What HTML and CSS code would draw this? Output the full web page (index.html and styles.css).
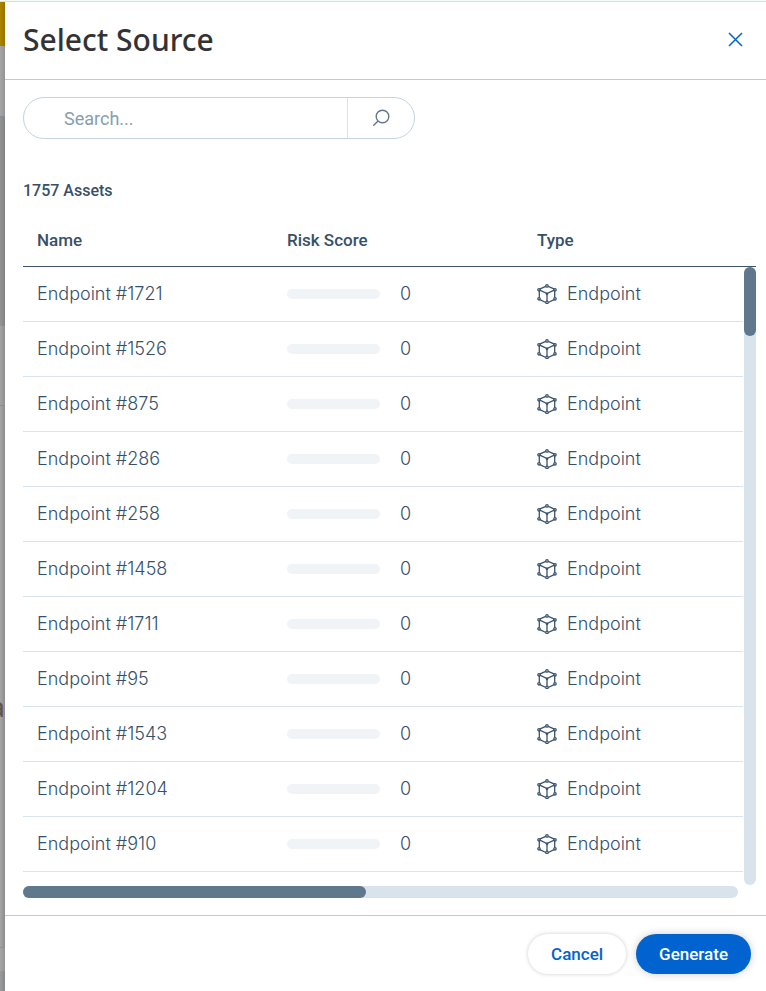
FILE: index.html
```html
<!DOCTYPE html>
<html lang="en">
<head>
  <meta charset="UTF-8">
  <meta name="viewport" content="width=device-width, initial-scale=1.0">
  <title>Select Source</title>
  <link rel="stylesheet" href="styles.css">
</head>
<body>
  <svg class="sprite" aria-hidden="true">
    <symbol id="icon-endpoint" viewBox="0 0 20 20">
      <path d="M8.800 2.300 2.500 5.200M11.200 2.300l6.300 2.900M2.300 6.800v6.900M17.700 6.800v6.900M2.800 15.600l6 2.900M17.200 15.600l-6 2.900M2.800 6.200 10 9.600l7.200-3.400M10 9.600v7.600"/>
      <circle cx="10" cy="1.900" r="1.200"/>
      <circle cx="2" cy="5.800" r="1.200"/>
      <circle cx="18" cy="5.800" r="1.200"/>
      <circle cx="10" cy="9.800" r="0.700"/>
      <circle cx="2" cy="14.800" r="1.200"/>
      <circle cx="18" cy="14.800" r="1.200"/>
      <circle cx="10" cy="18.400" r="1.200"/>
    </symbol>
  </svg>

  <div class="top-line"></div>
  <div class="layout">
    <div class="backdrop">
      <div class="backdrop-brand"></div>
      <div class="backdrop-nav"></div>
      <div class="backdrop-hero"></div>
      <div class="backdrop-bar"></div>
      <div class="backdrop-page"><span>a</span></div>
      <div class="backdrop-foot"></div>
      <div class="backdrop-end"></div>
    </div>

    <main class="panel">
      <header class="panel-header">
        <h1>Select Source</h1>
        <button type="button" class="close" aria-label="Close">
          <svg width="15" height="15" viewBox="0 0 15 15"><path d="M1 1l13 13M14 1 1 14"/></svg>
        </button>
      </header>

      <section class="panel-body">
        <form class="search" id="searchForm">
          <input type="text" name="search" placeholder="Search..." aria-label="Search">
          <button type="submit" aria-label="Search">
            <svg width="18" height="18" viewBox="0 0 18 18"><circle cx="10.500" cy="7.500" r="6.300"/><path d="M6 12l-4.700 4.700"/></svg>
          </button>
        </form>

        <h2>1757 Assets</h2>

        <div class="assets">
          <table>
            <thead>
              <tr><th>Name</th><th>Risk Score</th><th>Type</th></tr>
            </thead>
            <tbody id="rows"></tbody>
          </table>
          <div class="scroll-y"><div class="track"><div class="thumb"></div></div></div>
        </div>
        <div class="scroll-x"><div class="thumb"></div></div>
      </section>

      <footer class="panel-footer">
        <button type="button" class="btn">Cancel</button>
        <button type="button" class="btn btn-primary">Generate</button>
      </footer>
    </main>
  </div>

  <script src="script.js"></script>
</body>
</html>
```

FILE: script.js
```js
const endpoints = [1721, 1526, 875, 286, 258, 1458, 1711, 95, 1543, 1204, 910];
const rows = document.getElementById('rows');

rows.innerHTML = endpoints.map((id) => `
  <tr>
    <td>Endpoint #${id}</td>
    <td><div class="risk"><span class="risk-bar"></span><span>0</span></div></td>
    <td><div class="type"><svg width="20" height="20"><use href="#icon-endpoint"/></svg><span>Endpoint</span></div></td>
  </tr>`).join('');

document.getElementById('searchForm').addEventListener('submit', (e) => {
  e.preventDefault();
});
```

FILE: styles.css
```css
* {
  box-sizing: border-box;
}
body {
  margin: 0;
  height: 100vh;
  display: flex;
  flex-direction: column;
  overflow: hidden;
  font-family: Inter, "Liberation Sans", sans-serif;
  font-size: 18px;
  font-weight: 300;
  color: #36506a;
  background: #fff;
}
.sprite {
  display: none;
}
.top-line {
  height: 2px;
  background: #f4faf9;
  border-bottom: 1px solid #d8e2e2;
}
.layout {
  flex: 1;
  min-height: 0;
  display: flex;
}

/* dimmed page behind the panel */
.backdrop {
  width: 5px;
  display: flex;
  flex-direction: column;
  overflow: hidden;
  background: #a0a0a0;
}
.backdrop-brand {
  height: 44px;
  background: linear-gradient(to right, #ad8500, #967300);
}
.backdrop-nav {
  height: 71px;
  background: linear-gradient(to right, #a6a6a6, #949494);
  border-bottom: 1px solid #7f8c99;
}
.backdrop-hero {
  height: 209px;
  background: linear-gradient(to right, #949494, #828282);
}
.backdrop-bar {
  height: 80px;
  background: linear-gradient(to right, #a3a3a3, #8f8f8f);
  border-bottom: 1px solid #8c8c8c;
}
.backdrop-page {
  flex: 1;
  display: flex;
  align-items: center;
  justify-content: flex-end;
  padding-top: 58px;
  font: 400 28px/40px "Noto Sans", sans-serif;
  color: #5c5552;
  background: linear-gradient(to right, #a6a6a6, #8c8c8c);
}
.backdrop-foot {
  height: 24px;
  background: linear-gradient(to right, #a6a6a6, #949494);
  border-top: 1px solid #8f8f8f;
}
.backdrop-end {
  height: 20px;
  background: linear-gradient(to right, #9a9c9f, #85878a);
}

.panel {
  flex: 1;
  min-width: 0;
  display: flex;
  flex-direction: column;
  background: #fff;
}
.panel-header {
  display: flex;
  align-items: center;
  justify-content: space-between;
  height: 78px;
  padding: 0 22px 2px 18px;
  border-bottom: 1px solid #c8c8c8;
}
h1 {
  margin: 0;
  font: 500 30px/40px "Noto Sans", "Open Sans", sans-serif;
  color: #333;
}
.close {
  display: flex;
  padding: 1px;
  border: 0;
  background: none;
  cursor: pointer;
}
.close svg {
  fill: none;
  stroke: #0063cf;
  stroke-width: 1.5;
}

.panel-body {
  flex: 1;
  min-height: 0;
  display: flex;
  flex-direction: column;
  padding: 17px 10px 17px 18px;
}
.search {
  display: flex;
  width: 392px;
  height: 42px;
  flex-shrink: 0;
  border: 1px solid #c5d4e0;
  border-radius: 21px;
  overflow: hidden;
}
.search input {
  flex: 1;
  min-width: 0;
  padding: 0 40px;
  border: 0;
  outline: 0;
  font: 400 18px Roboto, sans-serif;
  color: #36506a;
  background: none;
}
.search input::placeholder {
  color: #879eb1;
}
.search button {
  display: flex;
  align-items: center;
  justify-content: center;
  width: 67px;
  padding: 0;
  border: 0;
  border-left: 1px solid #d9e3eb;
  background: none;
  cursor: pointer;
}
.search svg {
  fill: none;
  stroke: #5f788d;
  stroke-width: 1.4;
}
h2 {
  margin: 40px 0 11px;
  font: 500 16px/24px Roboto, sans-serif;
}

.assets {
  position: relative;
  flex: 1;
  min-height: 0;
  overflow: hidden;
}
table {
  width: 100%;
  table-layout: fixed;
  border-spacing: 0;
}
th, td {
  padding: 0 0 0 14px;
  text-align: left;
}
th {
  width: 250px;
  height: 53px;
  font: 500 17px/24px Roboto, sans-serif;
  border-bottom: 1px solid #3a536b;
}
th:last-child {
  width: auto;
}
td {
  height: 55px;
  line-height: 24px;
  border-bottom: 1px solid #d9e3eb;
}
.risk {
  display: flex;
  align-items: center;
  gap: 20px;
}
.risk-bar {
  width: 93px;
  height: 10px;
  border-radius: 5px;
  background: #f0f4f7;
}
.type {
  display: flex;
  align-items: center;
  gap: 10px;
}
.type svg {
  fill: none;
  stroke: #3a536b;
  stroke-width: 1.3;
}

/* custom scrollbars */
.scroll-y {
  position: absolute;
  top: 53px;
  right: 0;
  bottom: 0;
  width: 13px;
  padding-left: 1px;
  background: #fff;
}
.track {
  height: 100%;
  border-radius: 6px;
  background: #d9e3eb;
}
.thumb {
  border-radius: 6px;
  background: #60788c;
}
.scroll-y .thumb {
  height: 69px;
}
.scroll-x {
  flex-shrink: 0;
  margin: 1px 18px 0 0;
  border-radius: 6px;
  background: #d9e3eb;
}
.scroll-x .thumb {
  width: 48%;
  height: 12px;
}

.panel-footer {
  display: flex;
  align-items: center;
  justify-content: flex-end;
  gap: 10px;
  height: 76px;
  padding: 0 15px;
  border-top: 1px solid #c8c8c8;
}
.btn {
  height: 40px;
  padding: 0 23px;
  border: 0;
  border-radius: 20px;
  font: 500 17px/24px Roboto, sans-serif;
  color: #0063cf;
  background: #fff;
  box-shadow: 0 0 4px rgba(0, 0, 0, 0.2);
  cursor: pointer;
}
.btn-primary {
  color: #fff;
  background: #0063cf;
  box-shadow: 0 0 8px rgba(0, 0, 0, 0.2);
}
```
